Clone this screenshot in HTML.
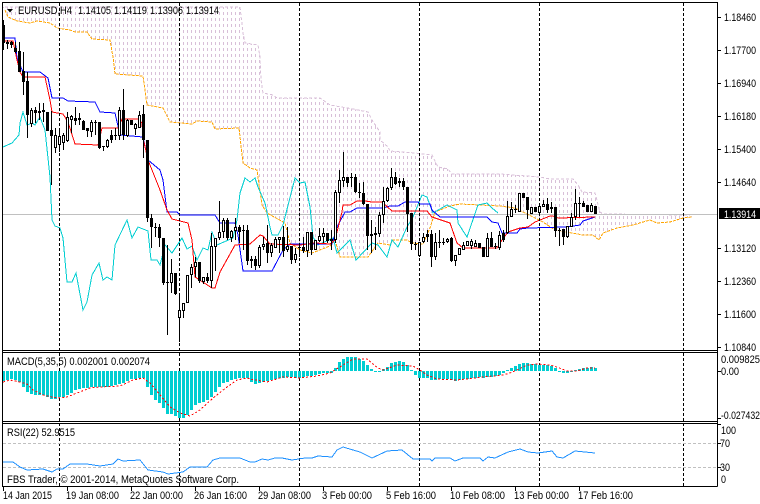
<!DOCTYPE html>
<html><head><meta charset="utf-8"><title>EURUSD,H4</title>
<style>html,body{margin:0;padding:0;background:#fff}svg{display:block}text{font-family:"Liberation Sans",sans-serif;font-size:11px;fill:#000}</style></head>
<body>
<svg width="760" height="504" viewBox="0 0 760 504" xmlns="http://www.w3.org/2000/svg">
<defs>
<pattern id="h" patternUnits="userSpaceOnUse" width="4" height="6"><rect x="3" y="0" width="1" height="3" fill="#d8bfd8"/></pattern>
<clipPath id="c1"><rect x="3" y="3" width="714" height="347"/></clipPath>
<clipPath id="c2"><rect x="3" y="353" width="714" height="68"/></clipPath>
</defs>
<rect width="760" height="504" fill="#fff"/>
<g clip-path="url(#c1)" shape-rendering="crispEdges">
<polygon fill="url(#h)" points="3,7 240,7 243,33 245,43 258,45 260,57 261,80 263,93 273,95 277,98 320,98 330,105 353,109 368,112 372,120 380,132 380,140 388,147 390,151 415,153 432,155 438,167 448,169 452,174 500,174 540,177 550,179 573,179 578,185 582,192 595,193 600,212 603,214 690,215 692,217 683,218 670,222 657,223 650,220 633,225 617,228 603,233 599,240 593,235 583,235 572,233 555,230 543,222 515,208 500,206 460,204 450,206 435,212 430,228 423,244 412,243 407,240 393,240 390,245 378,243 368,257 350,257 340,257 335,240 330,246 312,253 300,250 290,243 285,223 267,213 262,205 257,170 250,168 243,163 239,128 215,129 212,122 197,121 192,124 170,122 163,108 147,105 143,76 115,74 113,57 110,40 92,39 87,32 75,32 70,30 57,28 50,23 37,21 30,23 17,21 8,17 5,10"/>
<polyline fill="none" stroke="#d8bfd8" stroke-dasharray="3 2" points="5,7 240,7 243,33 245,43 258,45 260,57 261,80 263,93 273,95 277,98 320,98 330,105 353,109 368,112 372,120 380,132 380,140 388,147 390,151 415,153 432,155 438,167 448,169 452,174 500,174 540,177 550,179 573,179 578,185 582,192 595,193 600,212 603,214 690,215"/>
<line x1="3" y1="214.5" x2="717" y2="214.5" stroke="#c0c0c0"/>
<polyline fill="none" stroke="#ffa500" stroke-dasharray="3 1" points="5,10 8,17 17,21 30,23 37,21 50,23 57,28 70,30 75,32 87,32 92,39 110,40 113,57 115,74 143,76 147,105 163,108 170,122 192,124 197,121 212,122 215,129 239,128 243,163 250,168 257,170 262,205 267,213 285,223 290,243 300,250 312,253 330,246 335,240 340,257 350,257 368,257 378,243 390,245 393,240 407,240 412,243 423,244 430,228 435,212 450,206 460,204 500,206 515,208 543,222 555,230 572,233 583,235 593,235 599,240 603,233 617,228 633,225 650,220 657,223 670,222 683,218 692,217"/>
<polyline fill="none" stroke="#00ced1" points="3,147 12,143 19,135 20,123 23,112 27,125 32,123 35,125 40,117 45,130 50,177 52,220 55,226 60,228 63,238 67,282 72,282 76,273 83,310 87,302 92,275 99,263 103,280 107,277 112,280 115,245 127,220 132,238 138,227 148,231 151,260 157,260 160,265 165,245 172,253 182,238 187,249 192,246 197,260 203,248 208,250 212,232 217,245 233,238 237,220 240,193 245,178 250,182 255,178 258,187 265,203 270,227 272,235 278,235 283,225 295,178 300,183 305,182 310,207 313,237 318,245 333,238 337,253 350,240 356,260 372,243 378,245 387,257 392,240 398,247 407,227 413,217 422,195 427,197 433,213 447,205 457,210 458,223 467,237 478,205 487,203 492,208 498,213"/>
<polyline fill="none" stroke="#0000ff" points="3,38 15,38 17,58 23,72 40,72 48,78 52,98 63,98 68,101 95,102 100,112 115,113 120,135 143,137 148,160 160,170 163,180 167,212 177,212 180,215 215,215 220,223 235,223 238,235 243,271 272,271 283,250 290,244 332,244 337,227 345,212 350,212 357,208 383,208 390,206 398,206 405,202 418,202 420,204 430,204 432,210 440,217 487,217 492,222 498,223 502,233 507,233 517,233 520,229 528,228 567,227 580,225 583,221 595,217"/>
<polyline fill="none" stroke="#ff0000" points="3,41 13,41 17,60 20,72 23,77 45,77 50,100 52,112 63,114 68,122 75,144 98,145 102,128 118,128 122,119 138,119 142,123 143,138 148,160 160,190 167,210 172,219 188,223 192,240 195,277 212,288 215,288 220,272 235,245 250,244 260,235 263,236 270,244 300,245 315,243 330,244 335,240 342,212 343,205 350,205 357,201 365,201 372,202 382,202 392,211 427,211 432,217 450,223 457,243 463,248 497,248 502,240 508,232 520,228 528,227 535,222 550,216 553,216 558,218 595,217"/>
</g>
<g fill="none" stroke="#000" stroke-dasharray="3 2" shape-rendering="crispEdges">
<path d="M59.5 3V486M179.5 3V486M299.5 3V486M419.5 3V486M539.5 3V486M683.5 3V486"/>
</g>
<g clip-path="url(#c1)" fill="none" shape-rendering="crispEdges">
<path stroke="#000" d="M3.5 20V50M7.5 40V49M11.5 41V48M15.5 42V53M19.5 42V72M23.5 52V95M27.5 72V138M31.5 108V127M35.5 107V123M39.5 103V120M43.5 103V122M47.5 112V131M51.5 111V185M55.5 128V153M59.5 130V152M63.5 133V150M67.5 112V142M71.5 115V133M75.5 107V125M79.5 113V125M83.5 120V130M87.5 128V137M91.5 120V137M95.5 120V135M99.5 122V149M103.5 146V151M107.5 139V148M111.5 130V143M115.5 128V140M119.5 107V140M123.5 89V140M127.5 119V137M131.5 120V125M135.5 123V135M139.5 111V128M143.5 105V158M147.5 140V222M151.5 214V248M155.5 223V237M159.5 224V247M163.5 238V285M167.5 245V335M171.5 259V293M175.5 273V295M179.5 296V342M183.5 303V318M187.5 275V303M191.5 264V288M195.5 257V277M199.5 262V283M203.5 277V284M207.5 273V283M211.5 233V288M215.5 238V271M219.5 201V240M223.5 218V238M227.5 218V240M231.5 230V242M235.5 218V240M239.5 225V243M243.5 225V250M247.5 225V265M251.5 256V268M255.5 256V270M259.5 245V268M263.5 237V250M267.5 225V263M271.5 243V257M275.5 237V248M279.5 237V253M283.5 226V257M287.5 227V252M291.5 246V264M295.5 248V263M299.5 243V257M303.5 237V253M307.5 232V257M311.5 232V255M315.5 240V250M319.5 228V242M323.5 228V243M327.5 233V243M331.5 230V250M335.5 190V243M339.5 170V203M343.5 152V187M347.5 177V187M351.5 173V187M355.5 174V193M359.5 183V198M363.5 182V205M367.5 204V250M371.5 220V253M375.5 227V250M379.5 212V237M383.5 187V223M387.5 187V202M391.5 168V190M395.5 172V185M399.5 178V187M403.5 178V190M407.5 187V232M411.5 213V250M415.5 242V250M419.5 242V257M423.5 233V243M427.5 230V242M431.5 230V267M435.5 233V260M439.5 230V248M443.5 238V245M447.5 238V243M451.5 237V262M455.5 255V266M459.5 248V255M463.5 242V250M467.5 241V246M471.5 239V249M475.5 240V247M479.5 243V248M483.5 247V257M487.5 233V257M491.5 232V247M495.5 243V249M499.5 231V250M503.5 230V242M507.5 201V234M511.5 202V217M515.5 205V213M519.5 193V212M523.5 193V198M527.5 197V219M531.5 207V214M535.5 207V212M539.5 206V213M543.5 200V207M547.5 198V213M551.5 202V213M555.5 207V237M559.5 228V246M563.5 229V245M567.5 226V238M571.5 213V227M575.5 189V220M579.5 197V217M583.5 201V207M587.5 205V212M591.5 203V212M595.5 206V214"/>
<path stroke="#000" stroke-width="3" d="M3.5 25V43M7.5 42V44M11.5 42V45M15.5 48V52M19.5 51V72M23.5 71V82M27.5 81V115M31.5 110V124M35.5 110V113M39.5 111V113M43.5 110V112M47.5 112V131M51.5 130V136M55.5 135V148M59.5 136V145M63.5 135V143M67.5 117V141M71.5 116V120M75.5 118V121M79.5 118V120M83.5 121V130M87.5 128V131M91.5 122V132M95.5 122V123M99.5 122V148M103.5 146V147M107.5 140V147M111.5 135V140M115.5 135V136M119.5 110V136M123.5 110V135M127.5 120V136M131.5 120V125M135.5 124V129M139.5 115V128M143.5 114V140M147.5 140V218M151.5 218V227M155.5 227V228M159.5 227V238M163.5 238V283M167.5 282V283M171.5 273V283M175.5 273V294M179.5 310V318M183.5 303V311M187.5 275V303M191.5 267V275M195.5 262V267M199.5 262V281M203.5 277V282M207.5 277V281M211.5 246V281M215.5 238V247M219.5 232V238M223.5 220V232M227.5 220V238M231.5 231V238M235.5 227V231M239.5 227V232M243.5 230V231M247.5 230V261M251.5 259V261M255.5 259V266M259.5 247V266M263.5 244V247M267.5 243V253M271.5 245V253M275.5 239V248M279.5 237V240M283.5 237V251M287.5 246V250M291.5 246V260M295.5 254V260M299.5 247V248M303.5 247V251M307.5 232V251M311.5 232V250M315.5 240V250M319.5 236V241M323.5 233V237M327.5 233V241M331.5 239V241M335.5 192V240M339.5 180V193M343.5 177V181M347.5 177V183M351.5 177V178M355.5 177V192M359.5 192V193M363.5 193V204M367.5 204V236M371.5 234V236M375.5 233V235M379.5 215V234M383.5 201V215M387.5 188V201M391.5 177V188M395.5 177V184M399.5 181V183M403.5 181V187M407.5 187V214M411.5 213V244M415.5 244V245M419.5 242V256M423.5 237V242M427.5 234V237M431.5 234V257M435.5 242V257M439.5 242V243M443.5 242V243M447.5 239V242M451.5 238V261M455.5 255V261M459.5 248V255M463.5 245V250M467.5 241V246M471.5 241V246M475.5 243V247M479.5 243V248M483.5 247V257M487.5 238V257M491.5 238V247M495.5 246V247M499.5 235V248M503.5 233V240M507.5 216V233M511.5 209V217M515.5 209V210M519.5 193V212M523.5 193V198M527.5 197V210M531.5 207V214M535.5 207V212M539.5 206V213M543.5 204V207M547.5 204V210M551.5 207V209M555.5 207V231M559.5 230V231M563.5 229V237M567.5 226V237M571.5 217V227M575.5 203V217M579.5 203V204M583.5 203V207M587.5 205V212M591.5 205V212M595.5 206V214"/>
<path stroke="#fff" d="M31.5 111V123M55.5 136V147M59.5 137V144M63.5 136V142M67.5 118V140M71.5 117V119M91.5 123V131M107.5 141V146M119.5 111V135M127.5 121V135M135.5 125V128M139.5 116V127M171.5 274V282M179.5 311V317M183.5 304V310M187.5 276V302M191.5 268V274M195.5 263V266M203.5 278V281M211.5 247V280M215.5 239V246M219.5 233V237M223.5 221V231M231.5 232V237M235.5 228V230M259.5 248V265M263.5 245V246M271.5 246V252M275.5 240V247M279.5 238V239M287.5 247V249M295.5 255V259M307.5 233V250M315.5 241V249M319.5 237V240M323.5 234V236M335.5 193V239M339.5 181V192M343.5 178V180M379.5 216V233M383.5 202V214M387.5 189V200M391.5 178V187M419.5 243V255M423.5 238V241M435.5 243V256M447.5 240V241M455.5 256V260M459.5 249V254M463.5 246V249M467.5 242V245M471.5 242V245M475.5 244V246M487.5 239V256M499.5 236V247M507.5 217V232M511.5 210V216M519.5 194V211M531.5 208V213M539.5 207V212M543.5 205V206M567.5 227V236M571.5 218V226M575.5 204V216M591.5 206V211"/>
</g>
<g clip-path="url(#c2)" fill="none" shape-rendering="crispEdges">
<path stroke="#00ced1" stroke-width="3" d="M3.5 371V381M7.5 371V380M11.5 371V379M15.5 371V380M19.5 371V382M23.5 371V387M27.5 371V392M31.5 371V394M35.5 371V395M39.5 371V395M43.5 371V395M47.5 371V397M51.5 371V399M55.5 371V399M59.5 371V397M63.5 371V397M67.5 371V395M71.5 371V393M75.5 371V390M79.5 371V389M83.5 371V388M87.5 371V388M91.5 371V387M95.5 371V387M99.5 371V387M103.5 371V387M107.5 371V387M111.5 371V386M115.5 371V385M119.5 371V384M123.5 371V383M127.5 371V381M131.5 371V379M135.5 371V379M139.5 371V378M143.5 371V378M147.5 371V387M151.5 371V395M155.5 371V400M159.5 371V403M163.5 371V408M167.5 371V414M171.5 371V414M175.5 371V416M179.5 371V418M183.5 371V418M187.5 371V415M191.5 371V410M195.5 371V405M199.5 371V403M203.5 371V402M207.5 371V400M211.5 371V397M215.5 371V392M219.5 371V387M223.5 371V383M227.5 371V382M231.5 371V380M235.5 371V379M239.5 371V378M243.5 371V378M247.5 371V378M251.5 371V382M255.5 371V384M259.5 371V383M263.5 371V382M267.5 371V381M271.5 371V380M275.5 371V379M279.5 371V378M283.5 371V378M287.5 371V377M291.5 371V377M295.5 371V378M299.5 371V378M303.5 371V377M307.5 371V376M311.5 371V376M315.5 371V375M319.5 371V374M323.5 371V373M327.5 371V373M331.5 371V373M335.5 371V368M339.5 371V362M343.5 371V359M347.5 371V357M351.5 371V357M355.5 371V357M359.5 371V359M363.5 371V361M367.5 371V365M371.5 371V369M375.5 371V372M379.5 371V372M383.5 371V369M387.5 371V367M391.5 371V363M395.5 371V362M399.5 371V361M403.5 371V362M407.5 371V365M411.5 371V370M415.5 371V375M419.5 371V378M423.5 371V378M427.5 371V378M431.5 371V380M435.5 371V380M439.5 371V379M443.5 371V379M447.5 371V379M451.5 371V380M455.5 371V381M459.5 371V380M463.5 371V379M467.5 371V379M471.5 371V378M475.5 371V378M479.5 371V377M483.5 371V378M487.5 371V377M491.5 371V377M495.5 371V376M499.5 371V375M503.5 371V373M507.5 371V370M511.5 371V368M515.5 371V366M519.5 371V364M523.5 371V363M527.5 371V363M531.5 371V364M535.5 371V364M539.5 371V365M543.5 371V365M547.5 371V365M551.5 371V366M555.5 371V368M559.5 371V372M563.5 371V373M567.5 371V373M571.5 371V372M575.5 371V370M579.5 371V369M583.5 371V368M587.5 371V368M591.5 371V367M595.5 371V368"/>
<polyline stroke="#ff0000" stroke-dasharray="2 2" points="3,382 10,380 20,382 27,384 33,390 43,395 57,398 67,397 77,393 90,388 100,387 120,386 133,380 143,378 150,383 160,395 170,407 180,413 190,416 200,410 213,398 227,387 237,380 247,378 250,379 267,382 283,377 300,378 317,376 330,373 343,365 353,359 367,359 378,368 383,370 397,365 413,366 420,370 427,375 437,379 457,380 483,377 503,375 510,373 517,370 527,365 537,364 550,365 557,367 567,371 577,371 587,368 595,368"/>
</g>
<g fill="none" shape-rendering="crispEdges">
<path stroke="#c0c0c0" stroke-dasharray="3 2" d="M3 443.5H717M3 467.5H717"/>
<polyline stroke="#1e90ff" points="3,462 13,462 20,467 27,470 43,469 52,472 57,469 63,469 70,464 87,464 100,466 113,464 118,459 123,461 140,460 148,470 163,472 168,474 183,472 190,467 207,467 213,460 220,458 240,458 250,462 255,462 262,459 268,460 275,458 282,458 292,460 305,458 312,458 318,456 332,457 337,450 343,447 353,450 360,452 372,458 387,451 402,450 413,459 430,459 432,461 435,458 450,458 455,461 463,458 480,458 483,461 488,457 495,458 508,452 520,449 528,452 538,453 552,451 557,457 563,458 575,451 595,453"/>
<path stroke="#000" d="M2.5 2V486.5M2 2.5H717.5M2 350.5H717.5M2 352.5H717.5M2 421.5H717.5M2 423.5H717.5M2 486.5H717.5M717.5 2V486.5"/>
<path stroke="#000" d="M717 17.5H721M717 50.5H721M717 83.5H721M717 116.5H721M717 149.5H721M717 182.5H721M717 248.5H721M717 281.5H721M717 314.5H721M717 347.5H721M717 371.5H721M717 418.5H721M717 424.5H721M717 443.5H721M717 467.5H721M3.5 486V491M67.5 486V491M131.5 486V491M195.5 486V491M259.5 486V491M323.5 486V491M387.5 486V491M451.5 486V491M515.5 486V491M579.5 486V491"/>
<rect x="719" y="208" width="41" height="11" fill="#000"/>
</g>
<polygon points="7,9 13,9 10,12.5" fill="#000"/>
<text x="18" y="14" textLength="54" lengthAdjust="spacingAndGlyphs">EURUSD,H4</text>
<text x="78" y="14" textLength="33" lengthAdjust="spacingAndGlyphs">1.14105</text>
<text x="114" y="14" textLength="33" lengthAdjust="spacingAndGlyphs">1.14119</text>
<text x="150" y="14" textLength="33" lengthAdjust="spacingAndGlyphs">1.13906</text>
<text x="186" y="14" textLength="33" lengthAdjust="spacingAndGlyphs">1.13914</text>
<text x="724" y="21" textLength="32" lengthAdjust="spacingAndGlyphs">1.18460</text>
<text x="724" y="54" textLength="32" lengthAdjust="spacingAndGlyphs">1.17700</text>
<text x="724" y="87" textLength="32" lengthAdjust="spacingAndGlyphs">1.16940</text>
<text x="724" y="120" textLength="32" lengthAdjust="spacingAndGlyphs">1.16180</text>
<text x="724" y="153" textLength="32" lengthAdjust="spacingAndGlyphs">1.15400</text>
<text x="724" y="186" textLength="32" lengthAdjust="spacingAndGlyphs">1.14640</text>
<text x="724" y="218" textLength="32" lengthAdjust="spacingAndGlyphs" style="fill:#fff">1.13914</text>
<text x="724" y="252" textLength="32" lengthAdjust="spacingAndGlyphs">1.13120</text>
<text x="724" y="285" textLength="32" lengthAdjust="spacingAndGlyphs">1.12360</text>
<text x="724" y="318" textLength="32" lengthAdjust="spacingAndGlyphs">1.11600</text>
<text x="724" y="351" textLength="32" lengthAdjust="spacingAndGlyphs">1.10840</text>
<text x="721" y="363" textLength="39" lengthAdjust="spacingAndGlyphs">0.009825</text>
<text x="721" y="375" textLength="18" lengthAdjust="spacingAndGlyphs">0.00</text>
<text x="721" y="419" textLength="39" lengthAdjust="spacingAndGlyphs">-0.027432</text>
<text x="721" y="434" textLength="15" lengthAdjust="spacingAndGlyphs">100</text>
<text x="720" y="447" textLength="10" lengthAdjust="spacingAndGlyphs">70</text>
<text x="720" y="471" textLength="10" lengthAdjust="spacingAndGlyphs">30</text>
<text x="721" y="483" textLength="5" lengthAdjust="spacingAndGlyphs">0</text>
<text x="7" y="365" textLength="143" lengthAdjust="spacingAndGlyphs">MACD(5,35,5) 0.002001 0.002074</text>
<text x="7" y="436" textLength="68" lengthAdjust="spacingAndGlyphs">RSI(22) 52.9515</text>
<text x="7" y="483" textLength="232" lengthAdjust="spacingAndGlyphs">FBS Trader, © 2001-2014, MetaQuotes Software Corp.</text>
<text x="3" y="499" textLength="49" lengthAdjust="spacingAndGlyphs">14 Jan 2015</text>
<text x="66" y="499" textLength="53" lengthAdjust="spacingAndGlyphs">19 Jan 08:00</text>
<text x="130" y="499" textLength="53" lengthAdjust="spacingAndGlyphs">22 Jan 00:00</text>
<text x="194" y="499" textLength="53" lengthAdjust="spacingAndGlyphs">26 Jan 16:00</text>
<text x="258" y="499" textLength="53" lengthAdjust="spacingAndGlyphs">29 Jan 08:00</text>
<text x="322" y="499" textLength="50" lengthAdjust="spacingAndGlyphs">3 Feb 00:00</text>
<text x="386" y="499" textLength="50" lengthAdjust="spacingAndGlyphs">5 Feb 16:00</text>
<text x="450" y="499" textLength="55" lengthAdjust="spacingAndGlyphs">10 Feb 08:00</text>
<text x="514" y="499" textLength="55" lengthAdjust="spacingAndGlyphs">13 Feb 00:00</text>
<text x="578" y="499" textLength="55" lengthAdjust="spacingAndGlyphs">17 Feb 16:00</text>
</svg>
</body></html>
